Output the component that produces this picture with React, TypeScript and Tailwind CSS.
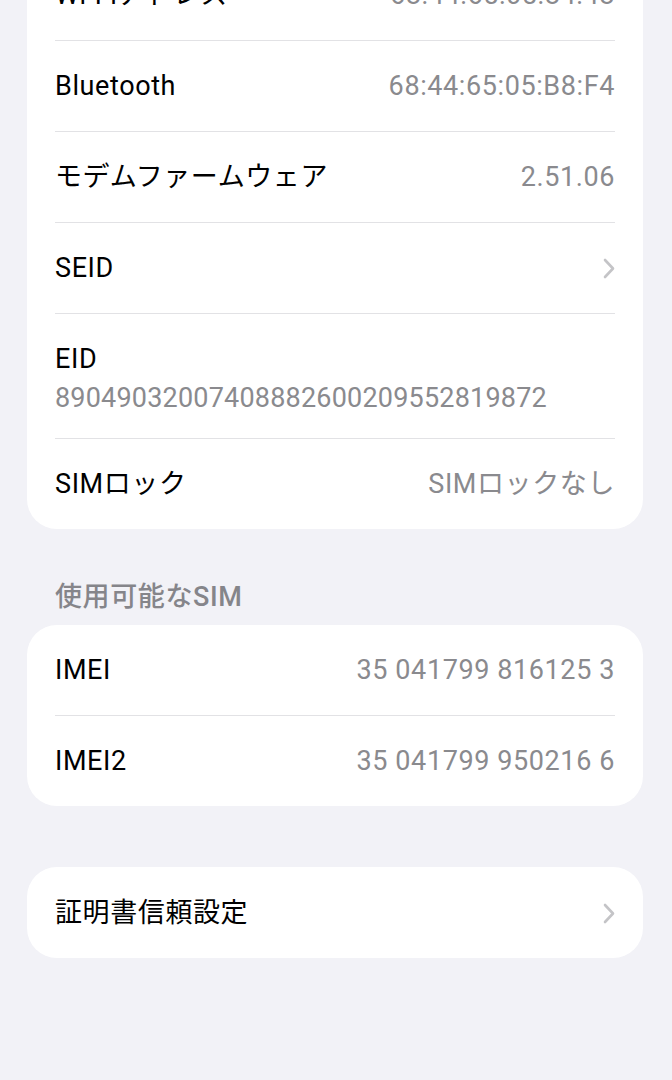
import React from 'react'

type Row = {
  label: string
  value?: string
  chevron?: boolean
}

const Chevron = () => (
  <svg width="12" height="21" viewBox="0 0 12 21" fill="none" className="shrink-0">
    <polyline points="2,2 10,10.5 2,19" stroke="#c4c4c7" strokeWidth="2.6" strokeLinecap="round" strokeLinejoin="round" />
  </svg>
)

const Separator = () => <div className="mx-[28px] h-px bg-[#e2e2e5]" />

const SettingRow = ({ row }: { row: Row }) => (
  <div className="flex h-[90px] items-center justify-between px-[28px]">
    <span className="text-black">{row.label}</span>
    {row.value && <span className="text-[#8a8a8e]">{row.value}</span>}
    {row.chevron && <Chevron />}
  </div>
)

const topRows: Row[] = [
  { label: 'Wi-Fiアドレス', value: '68:44:65:05:84:48' },
  { label: 'Bluetooth', value: '68:44:65:05:B8:F4' },
  { label: 'モデムファームウェア', value: '2.51.06' },
  { label: 'SEID', chevron: true },
]

const simRows: Row[] = [
  { label: 'IMEI', value: '35 041799 816125 3' },
  { label: 'IMEI2', value: '35 041799 950216 6' },
]

export default function App() {
  return (
    <div
      className="min-h-screen overflow-hidden bg-[#f2f2f7] text-[27px] leading-[32px] tracking-[0.6px]"
      style={{ fontFamily: 'Roboto, "Noto Sans CJK JP", sans-serif' }}
    >
      {/* about card, scrolled so the first row is cut off */}
      <div className="ml-[27px] mr-[29px] mt-[-50px] rounded-[30px] bg-white">
        {topRows.map((row) => (
          <React.Fragment key={row.label}>
            <SettingRow row={row} />
            <Separator />
          </React.Fragment>
        ))}
        <div className="h-[124px] px-[28px] pt-[29px]">
          <div className="text-black">EID</div>
          <div className="mt-[7px] tracking-[0.2px] text-[#8a8a8e]">89049032007408882600209552819872</div>
        </div>
        <Separator />
        <SettingRow row={{ label: 'SIMロック', value: 'SIMロックなし' }} />
      </div>

      <div className="mt-[52px] mb-[12px] h-[32px] px-[55px] font-medium text-[#85858a]">使用可能なSIM</div>

      <div className="ml-[27px] mr-[29px] rounded-[30px] bg-white">
        <SettingRow row={simRows[0]} />
        <Separator />
        <SettingRow row={simRows[1]} />
      </div>

      <div className="ml-[27px] mr-[29px] mt-[61px] rounded-[30px] bg-white">
        <div className="h-px" />
        <SettingRow row={{ label: '証明書信頼設定', chevron: true }} />
      </div>
    </div>
  )
}
